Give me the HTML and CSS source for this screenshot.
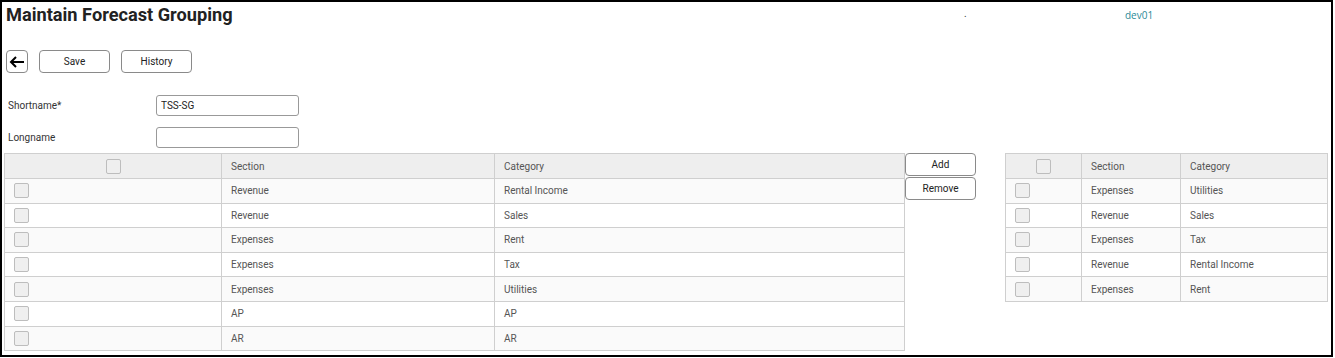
FILE: index.html
```html
<!DOCTYPE html>
<html lang="en">
<head>
    <meta charset="UTF-8">
    <title>Maintain Forecast Grouping</title>
    <link rel="stylesheet" href="styles.css">
</head>
<body>
<div class="page">
    <div class="top-bar">
        <h1 class="title">Maintain Forecast Grouping</h1>
        <span class="dot">.</span>
        <span class="env">dev01</span>
    </div>

    <div class="toolbar">
        <button class="btn btn-back" title="Back">
            <svg width="16" height="12" viewBox="0 0 16 12"><path d="M15 6H2M7 1L2 6l5 5" fill="none" stroke="#000" stroke-width="2"/></svg>
        </button>
        <button class="btn btn-wide">Save</button>
        <button class="btn btn-wide">History</button>
    </div>

    <div class="form-row">
        <label class="form-label">Shortname*</label>
        <input class="form-input" type="text" value="TSS-SG">
    </div>
    <div class="form-row">
        <label class="form-label">Longname</label>
        <input class="form-input" type="text" value="">
    </div>

    <div class="grids">
        <table class="grid grid-left">
            <thead>
                <tr>
                    <th class="col-check center"><span class="check"></span></th>
                    <th class="col-section">Section</th>
                    <th>Category</th>
                </tr>
            </thead>
            <tbody>
                <tr><td class="col-check"><span class="check"></span></td><td>Revenue</td><td>Rental Income</td></tr>
                <tr><td class="col-check"><span class="check"></span></td><td>Revenue</td><td>Sales</td></tr>
                <tr><td class="col-check"><span class="check"></span></td><td>Expenses</td><td>Rent</td></tr>
                <tr><td class="col-check"><span class="check"></span></td><td>Expenses</td><td>Tax</td></tr>
                <tr><td class="col-check"><span class="check"></span></td><td>Expenses</td><td>Utilities</td></tr>
                <tr><td class="col-check"><span class="check"></span></td><td>AP</td><td>AP</td></tr>
                <tr><td class="col-check"><span class="check"></span></td><td>AR</td><td>AR</td></tr>
            </tbody>
        </table>

        <div class="move-buttons">
            <button class="btn btn-move">Add</button>
            <button class="btn btn-move">Remove</button>
        </div>

        <table class="grid grid-right">
            <thead>
                <tr>
                    <th class="col-check center"><span class="check"></span></th>
                    <th class="col-section">Section</th>
                    <th>Category</th>
                </tr>
            </thead>
            <tbody>
                <tr><td class="col-check"><span class="check"></span></td><td>Expenses</td><td>Utilities</td></tr>
                <tr><td class="col-check"><span class="check"></span></td><td>Revenue</td><td>Sales</td></tr>
                <tr><td class="col-check"><span class="check"></span></td><td>Expenses</td><td>Tax</td></tr>
                <tr><td class="col-check"><span class="check"></span></td><td>Revenue</td><td>Rental Income</td></tr>
                <tr><td class="col-check"><span class="check"></span></td><td>Expenses</td><td>Rent</td></tr>
            </tbody>
        </table>
    </div>
</div>
</body>
</html>
```
FILE: styles.css
```css
body {
    margin: 0;
    background-color: #fff;
    font-family: 'Roboto', 'Liberation Sans', sans-serif;
    color: #333;
}

.page {
    width: 1333px;
    height: 357px;
    box-sizing: border-box;
    border: 2px solid #000;
}

.top-bar {
    display: flex;
    align-items: flex-start;
    height: 46px;
}

.title {
    margin: 2px 0 0 4px;
    font-size: 18.2px;
    font-weight: bold;
    color: #222;
    width: 958px;
}

.dot {
    font-size: 10px;
    margin-top: 6px;
    width: 161px;
}

.env {
    font-family: 'Open Sans', sans-serif;
    font-size: 10px;
    color: #2b8a97;
    margin-top: 6px;
}

.toolbar {
    display: flex;
    gap: 11px;
    margin: 2px 0 0 4px;
}

.btn {
    background-color: #fff;
    border: 1px solid #8a8a8a;
    border-radius: 4px;
    font-family: 'Roboto', sans-serif;
    font-size: 10px;
    color: #222;
    padding: 0;
    cursor: pointer;
}

.btn-back {
    width: 22px;
    height: 23px;
    display: flex;
    align-items: center;
    justify-content: center;
}

.btn-wide {
    width: 71px;
    height: 23px;
}

.form-row {
    display: flex;
    align-items: center;
    height: 21px;
    margin-top: 22px;
}

.form-row + .form-row {
    margin-top: 11px;
}

.form-label {
    width: 148px;
    padding-left: 6px;
    font-size: 10px;
    color: #333;
}

.form-input {
    width: 143px;
    height: 21px;
    margin: 0;
    box-sizing: border-box;
    border: 1px solid #999;
    border-radius: 3px;
    padding: 0 4px;
    font-family: 'Roboto', sans-serif;
    font-size: 10px;
    color: #222;
}

.grids {
    display: flex;
    align-items: flex-start;
    margin-top: 5px;
    padding-left: 2px;
}

.grid {
    border-collapse: collapse;
    font-size: 10px;
    color: #555;
}

.grid th, .grid td {
    border: 1px solid #cfcfcf;
    padding: 0 0 0 9px;
    text-align: left;
    font-weight: normal;
    height: 24.6px;
    box-sizing: border-box;
}

.grid th {
    background-color: #eeeeee;
    height: 25px;
}

.grid tbody tr:nth-child(odd) {
    background-color: #fafafa;
}

.grid .center {
    text-align: center;
    padding: 0;
}

.check {
    display: inline-block;
    width: 15px;
    height: 15px;
    box-sizing: border-box;
    border: 1px solid #bdbdbd;
    border-radius: 2px;
    background-color: #efefef;
    vertical-align: middle;
}

.grid-left {
    width: 901px;
}

.grid-left .col-check {
    width: 217px;
}

.grid-left .col-section {
    width: 273px;
}

.grid-right {
    width: 323px;
    margin-left: 29px;
}

.grid-right .col-check {
    width: 76px;
}

.grid-right .col-section {
    width: 99px;
}

.move-buttons {
    display: flex;
    flex-direction: column;
    gap: 1px;
}

.btn-move {
    width: 71px;
    height: 23px;
}
```
